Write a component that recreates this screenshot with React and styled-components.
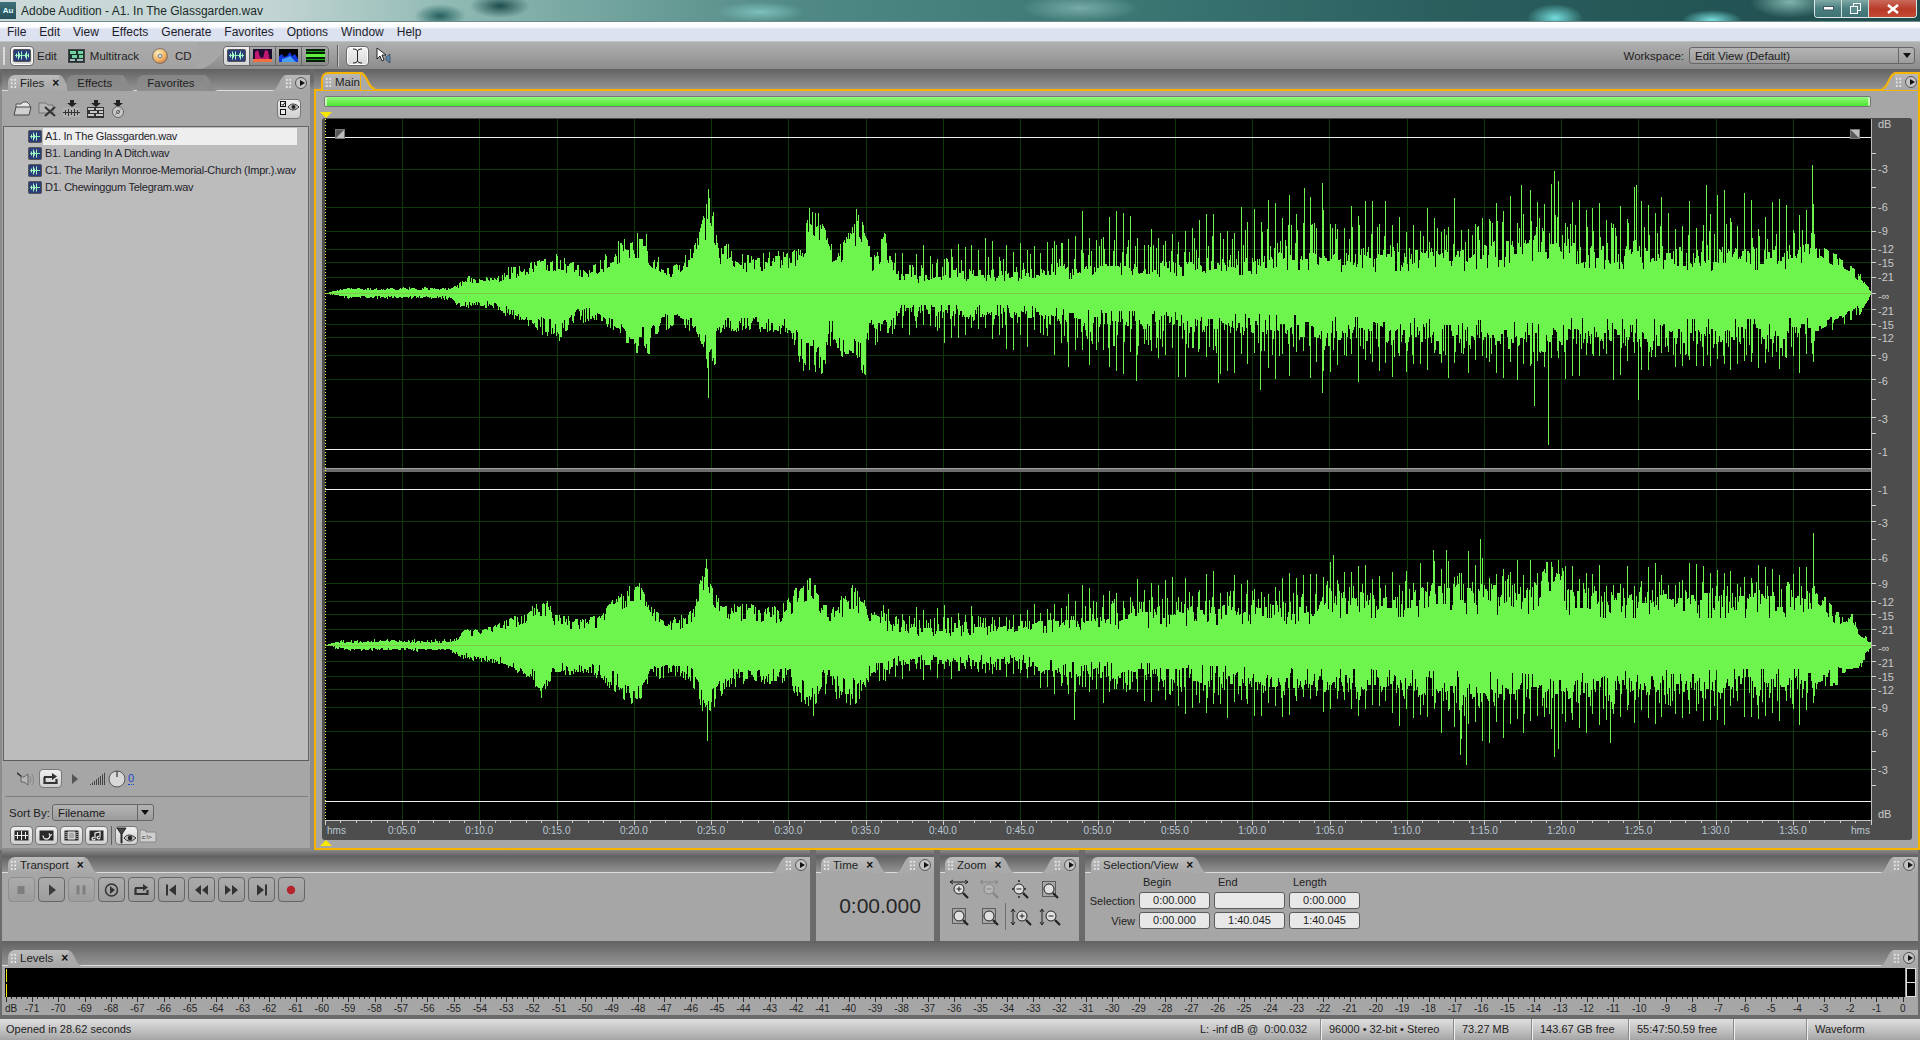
import React from 'react';
import styled, { createGlobalStyle } from 'styled-components';

const FONT = `"Liberation Sans", Arial, sans-serif`;

const GlobalStyle = createGlobalStyle`
  html, body { margin: 0; padding: 0; background: #6b6b6b; }
  * { box-sizing: border-box; }
`;

/* ---------- waveform data: [x, body amplitude, spike amplitude] in page px ---------- */

const CHANNELS = [
  {
    center: 293,
    top: [[325,0,0],[335,2,3],[345,4,5],[450,4,6],[455,6,9],[465,11,18],[480,12,17],[495,12,18],[505,18,26],[530,25,33],[540,29,36],[555,30,38],[575,24,30],[587,17,24],[605,32,42],[620,42,55],[645,42,65],[655,28,40],[665,20,30],[680,24,34],[695,38,50],[703,65,80],[708,75,105],[715,60,80],[720,35,45],[730,42,50],[740,30,40],[775,30,42],[800,33,45],[805,50,65],[810,72,95],[817,65,72],[826,50,60],[833,32,45],[840,35,50],[852,58,70],[858,72,84],[867,52,65],[871,25,40],[879,38,50],[884,52,66],[891,28,40],[895,14,40],[938,14,55],[945,17,55],[1041,17,60],[1065,20,85],[1093,22,85],[1144,22,78],[1200,25,85],[1248,26,95],[1282,33,100],[1310,33,105],[1322,28,110],[1340,30,100],[1466,32,95],[1480,36,100],[1521,38,108],[1536,48,110],[1554,50,122],[1566,36,100],[1636,34,108],[1665,34,95],[1706,32,108],[1790,34,95],[1812,36,100],[1817,40,50],[1836,30,36],[1854,20,25],[1862,13,16],[1871,1,2]],
    bottom: [[325,0,0],[335,2,4],[345,4,6],[450,4,7],[460,12,16],[480,11,15],[495,12,16],[505,17,24],[520,24,30],[540,32,38],[560,38,46],[572,24,34],[590,20,28],[600,24,32],[620,30,40],[630,48,58],[650,48,58],[660,30,38],[680,25,35],[695,30,40],[700,38,50],[707,60,80],[715,55,70],[720,35,45],[740,28,38],[770,30,40],[790,35,45],[800,60,72],[805,70,85],[824,62,72],[829,35,55],[845,55,62],[865,66,75],[869,30,50],[886,35,65],[896,17,45],[1041,18,62],[1065,24,80],[1144,26,82],[1248,30,90],[1340,34,90],[1466,38,85],[1540,44,95],[1570,36,90],[1665,38,85],[1812,36,88],[1820,36,40],[1836,28,32],[1854,22,26],[1862,14,17],[1871,1,2]],
    topPeaks: { 1812: 128, 1554: 122, 1521: 108, 1636: 108, 1706: 108, 1322: 110, 1304: 105, 708: 104 },
    bottomPeaks: { 1548: 152, 1534: 113, 1638: 107, 708: 105, 1322: 100, 1260: 97, 1218: 90, 1136: 88 },
  },
  {
    center: 645,
    top: [[325,0,0],[335,2,3],[345,3,6],[450,3,6],[455,5,8],[465,14,18],[480,11,15],[495,18,22],[515,24,28],[535,34,44],[545,38,44],[555,24,30],[580,21,28],[600,24,32],[610,38,44],[625,48,56],[640,48,70],[650,30,40],[665,20,28],[680,22,30],[695,35,44],[703,62,72],[706,80,86],[710,52,62],[720,38,46],[735,33,42],[780,30,40],[795,48,55],[810,55,68],[817,50,60],[824,32,45],[834,30,40],[848,46,65],[865,38,50],[869,28,40],[886,20,42],[903,13,38],[972,13,42],[1041,17,45],[1065,20,60],[1136,24,70],[1237,30,78],[1316,30,72],[1327,52,85],[1340,38,78],[1414,40,85],[1466,45,100],[1525,42,90],[1543,60,90],[1562,60,90],[1570,40,80],[1660,38,84],[1720,38,88],[1810,40,80],[1813,50,60],[1821,42,50],[1836,28,34],[1852,25,30],[1858,13,17],[1871,2,4]],
    bottom: [[325,0,0],[335,2,4],[345,4,6],[450,4,7],[460,11,15],[475,11,16],[490,14,18],[510,21,26],[530,29,34],[540,44,48],[550,27,36],[570,24,30],[590,24,30],[610,34,40],[625,44,50],[640,48,56],[650,30,40],[670,22,30],[690,30,38],[700,52,60],[705,70,80],[715,48,58],[725,34,42],[760,30,38],[790,32,38],[800,48,58],[815,56,66],[824,32,50],[845,44,60],[857,44,60],[869,28,40],[903,14,35],[1020,14,36],[1041,20,45],[1074,24,62],[1144,26,65],[1218,30,75],[1300,34,72],[1340,34,70],[1466,38,100],[1550,42,95],[1640,36,85],[1812,34,80],[1821,32,38],[1858,30,33],[1863,14,18],[1871,2,4]],
    topPeaks: { 1813: 112, 706: 86, 1480: 106, 1333: 90, 1433: 95, 1446: 95 },
    bottomPeaks: { 1466: 120, 1460: 110, 707: 96, 1074: 75, 1554: 112, 1610: 98, 1558: 104 },
  },
];

const seeded = (seed) => () => {
  seed = (seed + 0x6d2b79f5) | 0;
  let t = Math.imul(seed ^ (seed >>> 15), 1 | seed);
  t = (t + Math.imul(t ^ (t >>> 7), 61 | t)) ^ t;
  return ((t ^ (t >>> 14)) >>> 0) / 4294967296;
};

const buildPeaks = (points, explicit, seed) => {
  const rnd = seeded(seed);
  const peaks = [];
  let seg = 0;
  let grain = 1;
  for (let x = 325; x < 1871; x++) {
    while (seg < points.length - 2 && points[seg + 1][0] <= x) seg++;
    const [x0, b0, s0] = points[seg];
    const [x1, b1, s1] = points[seg + 1];
    const t = (x - x0) / (x1 - x0);
    const body = b0 + (b1 - b0) * t;
    const spike = s0 + (s1 - s0) * t;
    if (rnd() < 0.55) grain = (x > 895 && x < 1818 ? 0.8 : 0.7) + 0.6 * rnd();
    let amp = body * grain;
    if (x < 895) {
      if (rnd() < 0.3) amp = body + (spike - body) * rnd();
    } else if (x < 1818) {
      const beat = (x - 895) % 6.9 < 1;
      if (beat) amp = body + (spike - body) * (0.45 + 0.55 * Math.pow(rnd(), 1.4));
      else if (rnd() < 0.3) amp = body + (spike - body) * 0.55 * rnd();
      else if (rnd() < 0.12) amp = body * 0.7;
    }
    if (explicit[x]) amp = explicit[x];
    peaks.push(Math.round(amp));
  }
  return peaks;
};

const wavePath = CHANNELS.map((ch, i) => {
  const tops = buildPeaks(ch.top, ch.topPeaks, 11 + i * 7);
  const bots = buildPeaks(ch.bottom, ch.bottomPeaks, 29 + i * 13);
  return tops.map((a, k) => `M${325 + k + 0.5} ${ch.center - a}V${ch.center + bots[k]}`).join('');
}).join('');

const GRID_X = Array.from({ length: 19 }, (_, i) => 402 + 77.28 * i);
const GRID_OFFSETS = [124, 86, 62, 44, 31, 16];
const TIME_LABELS = ['0:05.0','0:10.0','0:15.0','0:20.0','0:25.0','0:30.0','0:35.0','0:40.0','0:45.0','0:50.0','0:55.0','1:00.0','1:05.0','1:10.0','1:15.0','1:20.0','1:25.0','1:30.0','1:35.0'];
const DB_LABELS = [
  ['-3',173],['-6',211],['-9',235],['-12',253],['-15',267],['-21',281],['-∞',300],['-21',315],['-15',329],['-12',342],['-9',361],['-6',385],['-3',423],['-1',456],
  ['-1',494],['-3',527],['-6',562],['-9',588],['-12',606],['-15',620],['-21',634],['-∞',652],['-21',667],['-15',681],['-12',694],['-9',712],['-6',737],['-3',774],
];

/* ---------- shell ---------- */

const Root = styled.div`
  width: 1920px;
  height: 1040px;
  overflow: hidden;
  display: flex;
  flex-direction: column;
  background: #6b6b6b;
  font: 11.5px ${FONT};
  color: #222;
`;

const TitleBar = styled.div`
  height: 21px;
  flex: none;
  display: flex;
  align-items: flex-start;
  justify-content: space-between;
  background:
    radial-gradient(ellipse 28px 14px at 1555px 18px, #74dcdc, transparent),
    radial-gradient(ellipse 30px 10px at 1712px 20px, #78e0e0, transparent),
    radial-gradient(ellipse 40px 16px at 1790px 2px, #7fb3ac, transparent),
    radial-gradient(ellipse 30px 12px at 500px 6px, #1d4d4d, transparent),
    radial-gradient(ellipse 26px 12px at 440px 16px, #24605f, transparent),
    radial-gradient(ellipse 44px 10px at 760px 12px, #7cc0bc, transparent),
    radial-gradient(ellipse 60px 14px at 1080px 8px, #76aaa6, transparent),
    linear-gradient(90deg, #ccdad9 0, #c3d5d3 14%, #8db8b2 24%, #4f8884 42%, #3a7572 60%, #2a5f5e 75%, #1f4c4d 100%);
`;

const TitleLeft = styled.div`
  display: flex;
  align-items: center;
  height: 21px;
`;

const AppIcon = styled.div`
  width: 16px;
  height: 17px;
  margin-right: 5px;
  background: linear-gradient(#3e6f78, #27505a);
  color: #dff;
  font: bold 8px/17px ${FONT};
  text-align: center;
`;

const TitleText = styled.span`
  font-size: 12px;
  color: #1c2a2a;
`;

const WindowControls = styled.div`
  display: flex;
  margin-right: 3px;
  height: 18px;
  border: 1px solid #dfe8e8;
  border-top: 0;
  border-radius: 0 0 4px 4px;
  overflow: hidden;
`;

const WinBtn = styled.div`
  width: ${(p) => p.$w}px;
  display: flex;
  align-items: center;
  justify-content: center;
  border-right: 1px solid #cfe0de;
  background: ${(p) => (p.$close ? 'linear-gradient(#c96a5c, #b93a28 55%, #c44a34)' : 'linear-gradient(#7fa9a6, #4a7f7f 50%, #3f7273)')};
  &:last-child { border-right: 0; }
`;

const MenuBar = styled.div`
  height: 21px;
  flex: none;
  display: flex;
  padding-left: 1px;
  align-items: center;
  background: linear-gradient(#ffffff 0, #fbfcfe 25%, #dde2f1 35%, #dde2f1 94%, #a8a8a8 100%);
  border-top: 1px solid #6f8a8a;
`;

const MenuItem = styled.span`
  padding: 0 6px;
  margin-right: 1px;
  font-size: 12px;
  color: #1e1e2c;
`;

const ToolbarRow = styled.div`
  height: 27px;
  flex: none;
  display: flex;
  background: linear-gradient(#b0b0b0, #8c8c8c);
`;

const ToolbarLeft = styled.div`
  display: flex;
  align-items: center;
  width: 200px;
  padding-left: 3px;
  background: linear-gradient(#ababab, #a2a2a2);
`;

const ToolbarGrip = styled.div`
  width: 2px;
  height: 18px;
  margin-right: 5px;
  background-image: radial-gradient(#e0e0e0 0.8px, transparent 1px);
  background-size: 2px 3px;
`;

const ToolButton = styled.div`
  width: ${(p) => p.$w || 23}px;
  height: 20px;
  flex: none;
  display: flex;
  align-items: center;
  justify-content: center;
  border: 1px solid #6a6a6a;
  border-radius: 4px;
  background: linear-gradient(#f4f4f4, #d8d8d8);
  box-shadow: inset 0 0 0 1px #fff;
`;

const ViewLabel = styled.span`
  color: #222;
  margin: 0 ${(p) => p.$right || 0}px 0 ${(p) => p.$left || 0}px;
`;

const ModeGroup = styled.div`
  display: flex;
  align-items: center;
  height: 20px;
  margin-left: -14px;
  border: 1px solid #666;
  border-radius: 4px;
  overflow: hidden;
  background: #8a8a8a;
`;

const ModeCell = styled.div`
  width: 26px;
  height: 18px;
  display: flex;
  align-items: center;
  justify-content: center;
  border-right: 1px solid #666;
  background: ${(p) => (p.$on ? 'linear-gradient(#f0f0f0, #d4d4d4)' : 'linear-gradient(#a8a8a8, #8c8c8c)')};
  &:last-child { border-right: 0; }
`;

const ToolbarSep = styled.div`
  width: 1px;
  height: 22px;
  margin: 0 8px;
  background: #5c5c5c;
  box-shadow: 1px 0 0 #c6c6c6;
`;

const Middle = styled.div`
  display: flex;
  align-items: center;
  flex: 1;
`;

const CursorSlot = styled.span`
  margin-left: 7px;
`;

const WorkspacePick = styled.div`
  display: flex;
  align-items: center;
  gap: 5px;
  margin-right: 5px;
`;

const Select = styled.div`
  width: ${(p) => p.$w}px;
  height: 17px;
  display: flex;
  justify-content: space-between;
  align-items: center;
  border: 1px solid #666;
  border-radius: 3px;
  background: linear-gradient(#b4b4b4, #9c9c9c);
  padding-left: 5px;
  color: #1a1a1a;
`;

const SelectArrow = styled.span`
  width: 16px;
  height: 15px;
  border-left: 1px solid #666;
  display: flex;
  align-items: center;
  justify-content: center;
  &::after {
    content: '';
    border: 4px solid transparent;
    border-top: 5px solid #111;
    border-bottom: 0;
  }
`;

/* ---------- docked panels ---------- */

const WorkRow = styled.div`
  flex: 1;
  display: flex;
  gap: 4px;
  padding-left: 2px;
  min-height: 0;
  background: linear-gradient(#6a6a6a 0, #6a6a6a 12px, #8c8c8c 21px, #8c8c8c 100%);
`;

const DockRow = styled.div`
  height: ${(p) => p.$h}px;
  flex: none;
  display: flex;
  gap: 6px;
  padding: 0 2px;
`;

const Panel = styled.div`
  display: flex;
  flex-direction: column;
  width: ${(p) => (p.$w ? `${p.$w}px` : 'auto')};
  flex: ${(p) => (p.$w ? 'none' : 1)};
  min-width: 0;
  margin-bottom: ${(p) => p.$mb || 0}px;
`;

const TabBar = styled.div`
  height: ${(p) => p.$h}px;
  flex: none;
  display: flex;
  align-items: flex-end;
  position: relative;
  z-index: 2;
  background: linear-gradient(${(p) => (p.$fade ? '#8a8a8a 0, #626262 28%' : '#626262 0')}, #939393 100%);
`;

const Body = styled.div`
  flex: 1;
  min-height: 0;
  display: flex;
  flex-direction: column;
  background: #a6a6a6;
  border-top: 1px solid #dcdcdc;
`;

const FocusBody = styled(Body)`
  border: 2px solid #f6b400;
  padding-top: 5px;
`;

const TabShape = styled.div`
  display: flex;
  align-items: flex-end;
  height: ${(p) => p.$h || 16}px;
  margin-bottom: -1px;
  margin-left: ${(p) => p.$left || 0}px;
  position: relative;
`;

const TabFace = styled.div`
  display: flex;
  align-items: center;
  height: 100%;
  padding: ${(p) => (p.$active ? '0 0 0 2px' : '0 9px 0 10px')};
  gap: 3px;
  background: ${(p) => (p.$active ? 'linear-gradient(#bcbcbc, #a6a6a6)' : 'linear-gradient(#868686, #8e8e8e)')};
  border-top-left-radius: 7px;
  color: #1f1f1f;
  ${(p) => p.$focus && `
    border: 2px solid #f6b400;
    border-bottom: 0;
    background: linear-gradient(#b8b8b8, #a6a6a6);
  `}
`;

const Grip = styled.span`
  width: 7px;
  height: 11px;
  flex: none;
  background-image: radial-gradient(#e6e6e6 0.9px, transparent 1.1px);
  background-size: 3.5px 3.6px;
`;

const CloseMark = styled.span`
  font: bold 12px/10px ${FONT};
  margin-left: 5px;
  color: #111;
`;

const Ear = styled.div`
  display: flex;
  align-items: flex-end;
  margin-left: auto;
  height: ${(p) => p.$h || 16}px;
  margin-bottom: -1px;
`;

const EarFace = styled.div`
  height: 100%;
  display: flex;
  align-items: center;
  gap: 3px;
  padding-right: ${(p) => p.$pad || 3}px;
  background: linear-gradient(#b8b8b8, #a6a6a6);
  ${(p) => p.$focus && 'border-top: 2px solid #f6b400; border-right: 2px solid #f6b400;'}
`;

const PlayRound = styled.span`
  width: 12px;
  height: 12px;
  border-radius: 50%;
  border: 1px solid #555;
  background: #c4c4c4;
  display: flex;
  align-items: center;
  justify-content: center;
  &::after {
    content: '';
    margin-left: 2px;
    border: 3px solid transparent;
    border-left: 5px solid #111;
    border-right: 0;
  }
`;

const CurveSvg = styled.svg`
  display: block;
  flex: none;
  margin-left: ${(p) => p.$ml || 0}px;
  margin-right: ${(p) => p.$mr || 0}px;
`;

const Tab = ({ label, active, focus, close, grip, left, height }) => (
  <TabShape $left={left} $h={height}>
    <TabFace $active={active} $focus={focus}>
      {grip && <Grip />}
      <span>{label}</span>
      {close && <CloseMark>×</CloseMark>}
    </TabFace>
    <CurveSvg width="14" height={height || 16} viewBox="0 0 14 16" preserveAspectRatio="none" $ml={focus ? -1 : 0}>
      <path d="M0 0C6 0 8 16 14 16H0Z" fill={active ? '#aaaaaa' : '#8b8b8b'} />
      {focus && <path d="M0 1C6 1 7 15 14 15" fill="none" stroke="#f6b400" strokeWidth="2" />}
    </CurveSvg>
  </TabShape>
);

const PanelEar = ({ focus, height }) => (
  <Ear $h={height}>
    <CurveSvg width="14" height={height || 16} viewBox="0 0 14 16" preserveAspectRatio="none" $mr={-1}>
      <path d="M0 16C6 16 8 0 14 0V16Z" fill="#aaaaaa" />
      {focus && <path d="M0 15C6 15 7 1 14 1" fill="none" stroke="#f6b400" strokeWidth="2" />}
    </CurveSvg>
    <EarFace $focus={focus} $pad={focus ? 1 : 3}>
      <Grip />
      <PlayRound />
    </EarFace>
  </Ear>
);

/* ---------- files panel ---------- */

const FilesTools = styled.div`
  height: 35px;
  flex: none;
  display: flex;
  align-items: center;
  padding: 0 9px 0 11px;
  gap: 6px;
`;

const EyeButton = styled.div`
  margin-left: auto;
  width: 24px;
  height: 20px;
  display: flex;
  align-items: center;
  justify-content: center;
  border: 1px solid #777;
  border-radius: 4px;
  background: linear-gradient(#f0f0f0, #cfcfcf);
`;

const FileList = styled.div`
  flex: 1;
  margin: 0 1px;
  padding-top: 1px;
  background: #bcbcbc;
  border: 1px solid #646464;
  border-bottom-color: #5a5a5a;
`;

const FileRow = styled.div`
  height: 17px;
  display: flex;
  align-items: center;
  padding-left: 24px;
`;

const FileName = styled.span`
  margin-left: 1px;
  width: 254px;
  height: 17px;
  line-height: 17px;
  font-size: 11px;
  letter-spacing: -0.25px;
  padding-left: 2px;
  white-space: nowrap;
  color: #23232b;
  background: ${(p) => (p.$on ? '#eeeeee' : 'transparent')};
`;

const FilesFoot = styled.div`
  height: 87px;
  flex: none;
  display: flex;
  flex-direction: column;
`;

const PreviewRow = styled.div`
  height: 36px;
  flex: none;
  display: flex;
  align-items: center;
  padding-left: 11px;
  margin: 0 2px 0 3px;
  border-bottom: 1px solid #7e7e7e;
`;

const SmallBtn = styled.div`
  width: ${(p) => p.$w || 23}px;
  height: 19px;
  flex: none;
  display: flex;
  align-items: center;
  justify-content: center;
  margin-left: ${(p) => p.$ml || 0}px;
  border: 1px solid #777;
  border-radius: 4px;
  background: linear-gradient(#f0f0f0, #cfcfcf);
`;

const PlayHint = styled.svg`
  flex: none;
  margin: 0 11px 0 9px;
`;

const KnobSlot = styled.span`
  margin-left: 2px;
`;

const LinkValue = styled.span`
  color: #1846c8;
  font-size: 11px;
  border-bottom: 1px dotted #1846c8;
  margin-left: 2px;
`;

const SortRow = styled.div`
  display: flex;
  align-items: center;
  height: 17px;
  margin-top: 7px;
  padding-left: 7px;
  gap: 2px;
`;

const SortButtons = styled.div`
  display: flex;
  align-items: center;
  gap: 2px;
  margin-top: 5px;
  padding-left: 8px;
`;

const VSep = styled.div`
  width: 1px;
  height: 19px;
  margin: 0 1px;
  background: #5f5f5f;
`;

/* ---------- main panel ---------- */

const Overview = styled.div`
  height: 11px;
  width: 1547px;
  margin-left: 8px;
  flex: none;
  border: 1px solid #777;
  border-radius: 2px;
  background: linear-gradient(#96f880, #70f054 45%, #4ce434);
  box-shadow: inset 4px 0 0 -2px #c8f8b8, inset -4px 0 0 -2px #c8f8b8;
`;

const Chart = styled.svg`
  display: block;
  flex: none;
  margin-top: 1px;
  text {
    font: 10px ${FONT};
    fill: #bac6d2;
  }
  text.db {
    font-size: 11px;
    fill: #c9c9c9;
  }
`;

/* ---------- transport, time, zoom, selection ---------- */

const TransportBar = styled.div`
  display: flex;
  gap: 3px;
  padding: 4px 0 0 6px;
`;

const TransportBtn = styled.div`
  width: 27px;
  height: 25px;
  display: flex;
  align-items: center;
  justify-content: center;
  border-radius: 4px;
  border: 1px solid ${(p) => (p.$off ? '#8e8e8e' : '#666')};
  background: linear-gradient(#ababab, #9d9d9d);
`;

const TimeValue = styled.div`
  flex: 1;
  display: flex;
  align-items: center;
  justify-content: center;
  padding: 0 0 2px 10px;
  font-size: 21px;
  color: #262626;
`;

const ZoomGrid = styled.div`
  display: grid;
  grid-template-columns: repeat(4, 30px);
  grid-auto-rows: 27px;
  padding: 3px 0 0 5px;
`;

const ZoomCell = styled.div`
  display: flex;
  align-items: center;
  justify-content: center;
  border-left: ${(p) => (p.$sep ? '1px solid #707070' : '0')};
`;

const SelectionGrid = styled.div`
  display: grid;
  grid-template-columns: 49px 71px 71px 71px;
  grid-template-rows: 15px 17px 17px;
  column-gap: 4px;
  row-gap: 3px;
  padding: 1px 0 0 1px;
  font-size: 11px;
  align-items: center;
`;

const ColHead = styled.span`
  padding-left: 4px;
  color: #222;
`;

const RowHead = styled.span`
  text-align: right;
  color: #222;
`;

const TimeField = styled.div`
  height: 17px;
  line-height: 15px;
  text-align: center;
  font-size: 11px;
  border: 1px solid #5c5c5c;
  border-radius: 3px;
  background: #e8e8e8;
  color: #1d1d1d;
`;

/* ---------- levels, status ---------- */

const MeterRow = styled.div`
  height: 29px;
  display: flex;
  margin: 2px 2px 0 3px;
  gap: 1px;
  flex: none;
`;

const Meter = styled.div`
  flex: 1;
  position: relative;
  background: #000;
  &::before {
    content: '';
    position: absolute;
    left: 1px;
    top: 1px;
    bottom: 0;
    width: 1px;
    background: linear-gradient(#f4e800 47%, #000 47%, #000 52%, #f4e800 52%);
  }
`;

const PeakBoxes = styled.div`
  width: 10px;
  display: flex;
  flex-direction: column;
  gap: 1px;
  background: #ddd;
  padding: 1px;
`;

const PeakBox = styled.div`
  flex: 1;
  background: #000;
`;

const LevelScale = styled.svg`
  display: block;
  flex: none;
  text {
    font: 10px ${FONT};
    fill: #222;
  }
`;

const StatusBar = styled.div`
  height: 21px;
  flex: none;
  margin-top: 4px;
  display: flex;
  align-items: center;
  font-size: 11px;
  color: #222;
  background: linear-gradient(#dedede, #c4c4c4 50%, #a4a4a4);
`;

const StatusText = styled.div`
  flex: ${(p) => (p.$w ? 'none' : 1)};
  width: ${(p) => (p.$w ? `${p.$w}px` : 'auto')};
  height: 100%;
  line-height: 21px;
  padding-left: ${(p) => p.$pad ?? 7}px;
  white-space: pre;
  border-left: ${(p) => (p.$first ? '0' : '1px solid #eee')};
  box-shadow: ${(p) => (p.$first ? 'none' : '-1px 0 0 #8a8a8a')};
`;

/* ---------- icons ---------- */

const IconSvg = styled.svg`
  display: block;
  flex: none;
`;

const Svg = ({ w, h, children }) => (
  <IconSvg width={w} height={h} viewBox={`0 0 ${w} ${h}`}>{children}</IconSvg>
);

const WaveGlyph = ({ w = 20, h = 14 }) => (
  <Svg w={w} h={h}>
    <rect x="0.5" y="0.5" width={w - 1} height={h - 1} rx="1" fill="#2c3c78" stroke="#555" />
    <path d={`M2 ${h / 2}H${w - 2}`} stroke="#7ef0a8" />
    {[3, 5, 6, 8, 12, 13, 15, 17].filter((x) => x < w - 2).map((x, i) => (
      <path key={x} d={`M${x + 0.5} ${h / 2 - (i % 2 ? 4 : 2)}V${h / 2 + (i % 2 ? 4 : 2)}`} stroke="#a8f8c8" />
    ))}
  </Svg>
);

const TrackGlyph = () => (
  <Svg w={17} h={14}>
    <rect x="0.5" y="0.5" width="16" height="13" fill="#1e2f2c" stroke="#444" />
    <path d="M2 2h6v3H2zM10 2h5v3h-5zM4 6h5v3H4zM11 6h4v3h-4z" fill="#6fd2a0" />
    <path d="M2 10h5v2H2zM9 10h6v2H9z" fill="#a9b9c4" />
  </Svg>
);

const CdGlyph = () => (
  <Svg w={16} h={16}>
    <defs>
      <radialGradient id="cdg" cx="0.4" cy="0.35" r="0.75">
        <stop offset="0" stopColor="#fff6c8" /><stop offset="0.6" stopColor="#f0b060" /><stop offset="1" stopColor="#c06030" />
      </radialGradient>
    </defs>
    <circle cx="8" cy="8" r="7.5" fill="url(#cdg)" stroke="#777" />
    <circle cx="8" cy="8" r="2" fill="#ddd" stroke="#777" />
  </Svg>
);

const SpectralGlyph = ({ kind }) => {
  if (kind === 'freq') return (
    <Svg w={19} h={13}>
      <rect width="19" height="13" fill="#1a0a30" />
      <path d="M2 13V3l3-2 2 7 3 1 2-8 3 1 2 11Z" fill="#c0186c" />
      <rect y="10" width="19" height="3" fill="#f07040" />
    </Svg>
  );
  if (kind === 'pan') return (
    <Svg w={19} h={13}>
      <rect width="19" height="13" fill="#000" />
      <path d="M0 13V7l3-2 2 3 3-1 3-4 2 4 3-2 3 5v3Z" fill="#1238d8" />
      <path d="M3 13V10l4-1 4-2 3 3 3 3Z" fill="#48a0f0" />
    </Svg>
  );
  return (
    <Svg w={19} h={13}>
      <rect width="19" height="13" fill="#041c04" />
      <path d="M0 6.5h19" stroke="#60f040" strokeWidth="3" />
      <path d="M0 2.5h19M0 10.5h19" stroke="#18a018" />
    </Svg>
  );
};

const IBeam = () => (
  <Svg w={11} h={16}>
    <path d="M1 1c3 0 4 1 4.5 2v10c-.5 1-1.5 2-4.500 2M10 1c-3 0-4 1-4.500 2v10c.5 1 1.500 2 4.500 2" fill="none" stroke="#222" />
  </Svg>
);

const CursorGlyph = () => (
  <Svg w={17} h={17}>
    <path d="M1 1v11l3-3 2 5 2-1-2-5h4Z" fill="#fff" stroke="#111" strokeWidth="0.9" />
    <path d="M10 10l4-3v9l-4-3Z" fill="#5a84a8" stroke="#345" strokeWidth="0.7" />
  </Svg>
);

const FolderOpen = () => (
  <Svg w={19} h={17}>
    <path d="M3 7V4h5l2-2h4l3 3v3" fill="#e4e4e4" stroke="#555" />
    <path d="M1 15l2-8h15l-2 8Z" fill="#d0d0d0" stroke="#444" />
  </Svg>
);

const FolderClose = () => (
  <Svg w={19} h={17}>
    <path d="M1 3h7l2 2h5v8H1Z" fill="#b4b4b4" stroke="#777" />
    <path d="M7 7l10 9M17 7L7 16" stroke="#333" strokeWidth="2" />
  </Svg>
);

const ImportTo = ({ children }) => (
  <Svg w={18} h={18}>
    <path d="M7 0h4v3h3l-5 4-5-4h3Z" fill="#222" />
    {children}
  </Svg>
);

const ImportWave = () => (
  <ImportTo>
    <rect y="8" width="17" height="9" fill="#b0b0b0" />
    <path d="M0 12.500h17M2.500 10v5M5.500 9v7M8.500 10v5M11.500 9v7M14.500 10v5" stroke="#333" />
  </ImportTo>
);

const ImportTrack = () => (
  <ImportTo>
    <rect y="7" width="17" height="11" fill="#333" />
    <path d="M1 8h6v2H1zM9 8h7v2H9zM3 11h7v2H3zM12 11h4v2h-4zM1 14h6v2H1zM9 14h7v2H9z" fill="#c8c8c8" />
  </ImportTo>
);

const ImportCd = () => (
  <Svg w={14} h={18}>
    <path d="M5 0h4v3h3L7 7 2 3h3Z" fill="#222" />
    <circle cx="7" cy="12" r="5.500" fill="#c8c8c8" stroke="#666" />
    <circle cx="7" cy="12" r="1.500" fill="#eee" stroke="#555" />
    <path d="M4 15l6-6" stroke="#888" />
  </Svg>
);

const CheckEye = () => (
  <Svg w={21} h={17}>
    <rect x="1.500" y="1.500" width="5" height="5" fill="#eee" stroke="#111" />
    <path d="M2.500 4l1.500 1.500 2-3" fill="none" stroke="#111" />
    <rect x="1.500" y="9.500" width="5" height="5" fill="#eee" stroke="#111" />
    <path d="M9 7c3-4 7-4 11 0-4 4-8 4-11 0Z" fill="#bbb" stroke="#333" />
    <circle cx="14.500" cy="7" r="2" fill="#222" />
  </Svg>
);

const Speaker = () => (
  <Svg w={18} h={14}>
    <path d="M1 0l5 4-1 1-4-3Z" fill="#333" />
    <path d="M5 5h3l4-3v11l-4-3H5Z" fill="#b8b8b8" stroke="#666" />
    <path d="M14 4c1 2 1 5 0 7M16 2c2 3 2 8 0 11" fill="none" stroke="#888" />
  </Svg>
);

const LoopGlyph = ({ color = '#333' }) => (
  <Svg w={15} h={13}>
    <path d="M1.500 5v6h12V7" fill="none" stroke={color} strokeWidth="2.200" />
    <path d="M1 4h8V1l5 3.500L9 8V6H1Z" fill={color} />
  </Svg>
);

const Bars = () => (
  <Svg w={16} h={13}>
    {[0, 1, 2, 3, 4, 5, 6, 7].map((i) => (
      <path key={i} d={`M${i * 2 + 0.5} 13V${12 - i * 1.6}`} stroke="#444" />
    ))}
  </Svg>
);

const Knob = () => (
  <Svg w={18} h={18}>
    <circle cx="9" cy="9" r="8" fill="#d8d8d8" stroke="#555" />
    <path d="M9 1v6" stroke="#333" strokeWidth="1.200" />
  </Svg>
);

const FilterGlyph = ({ kind }) => (
  <Svg w={15} h={13}>
    <rect x="0.500" y="1.500" width="14" height="10" fill="#2a2a2a" />
    {kind === 'wave' && <path d="M1 6.500h13M3.500 3v7M7.500 2v9M11.500 3v7" stroke="#eee" />}
    {kind === 'loop' && <path d="M4 5a3.500 3.500 0 1 0 7 0M10 3l1 2 2-1" fill="none" stroke="#eee" strokeWidth="1.300" transform="translate(0 1.500)" />}
    {kind === 'film' && <path d="M4 3h7v7H4ZM2 3v1M2 5v1M2 7v1M2 9v1M13 3v1M13 5v1M13 7v1M13 9v1" fill="#aaa" stroke="#eee" />}
    {kind === 'note' && <path d="M6 9V4l5-1v5M6 9.500a1.500 1.200 0 1 1-1-1M11 8.500a1.500 1.200 0 1 1-1-1" fill="none" stroke="#eee" strokeWidth="1.200" />}
  </Svg>
);

const FunnelEye = () => (
  <Svg w={21} h={17}>
    <path d="M1 1h9L6 7v9l-1 0V7Z" fill="#444" stroke="#222" />
    <path d="M8 11c3-4 7-4 12 0-4 4-9 4-12 0Z" fill="#bbb" stroke="#333" />
    <circle cx="14" cy="11" r="2.200" fill="#222" />
  </Svg>
);

const DosFolder = () => (
  <Svg w={17} h={15}>
    <path d="M0 2h5l1 2h10v10H0Z" fill="#cfcfcf" stroke="#888" />
    <text x="2" y="11" fontSize="6" fontFamily="Liberation Sans" fill="#222">c:\&gt;</text>
  </Svg>
);

const TRANSPORT = [
  { key: 'stop', off: true, d: <rect x="3.500" y="3" width="7" height="8" fill="#7e7e7e" /> },
  { key: 'play', d: <path d="M5 1.500l7 5.500-7 5.500Z" fill="#3c3c3c" /> },
  { key: 'pause', off: true, d: <path d="M2.500 2.500h3v9h-3zM8.500 2.500h3v9h-3z" fill="#7e7e7e" /> },
  { key: 'playall', d: <><circle cx="7.500" cy="7" r="6" fill="none" stroke="#333" strokeWidth="1.500" /><path d="M6 3l5 4-5 4Z" fill="#333" /></> },
  { key: 'loop', loop: true },
  { key: 'start', d: <path d="M2 1.500h2v11H2zM12 1.500v11l-7-5.500Z" fill="#333" /> },
  { key: 'rew', d: <path d="M7 2v10L1 7ZM14 2v10L8 7Z" fill="#333" /> },
  { key: 'ff', d: <path d="M1 2v10l6-5ZM8 2v10l6-5Z" fill="#333" /> },
  { key: 'end', d: <path d="M3 1.500v11l7-5.500ZM11 1.500h2v11h-2Z" fill="#333" /> },
  { key: 'rec', d: <circle cx="7" cy="7" r="4.200" fill="#b4242a" /> },
];

const Magnifier = ({ sign, faded, frame, arrowTop, arrowV, dots }) => {
  const ink = faded ? '#858585' : '#222';
  const cx = arrowV ? 12 : 10;
  return (
    <Svg w={22} h={22}>
      {frame && <rect x="3.500" y="2.500" width="13" height="15" fill="none" stroke="#111" strokeDasharray="1 1" />}
      {arrowTop && <path d="M1 3h18M1 3l3-2M1 3l3 2M19 3l-3-2M19 3l-3 2" fill="none" stroke={ink} />}
      {arrowV && <path d="M3 3v16M3 3L1 6M3 3l2 3M3 19l-2-3M3 19l2-3" fill="none" stroke={ink} />}
      {dots && <path d="M10 1v2M10 17v2M3 10h2M15 10h2" stroke={ink} strokeWidth="1.500" />}
      <circle cx={cx} cy="10" r="5" fill={faded ? '#b6b6b6' : '#e0e0e0'} stroke={ink} />
      <path d={`M${cx + 4} 14l5 5`} stroke={ink} strokeWidth="2.200" />
      {sign && <path d={`M${cx - 2.5} 10h5${sign === '+' ? `M${cx} 7.500v5` : ''}`} stroke={ink} />}
    </Svg>
  );
};

const Handle = ({ x, flip }) => (
  <g transform={`translate(${x} 129)`}>
    <rect width="10" height="10" fill="#5a5a5a" />
    <path d={flip ? 'M0 0h10v10Z' : 'M10 0v10H0Z'} fill="#bdbdbd" />
    <rect x="0.500" y="0.500" width="9" height="9" fill="none" stroke="#777" />
  </g>
);

const WaveChart = () => (
  <Chart width="1602" height="740" viewBox="316 108 1602 740">
    <rect x="322" y="118" width="1590" height="722" rx="3" fill="#4d4d4d" />
    <rect x="325" y="119" width="1547" height="701" fill="#000" />
    <g stroke="#0d380a" strokeWidth="1" shapeRendering="crispEdges">
      {GRID_X.map((x) => <path key={x} d={`M${Math.round(x) + 0.5} 119V820`} />)}
      {CHANNELS.map((ch) => GRID_OFFSETS.flatMap((o) => [ch.center - o, ch.center + o]).map((y) => (
        <path key={`${ch.center}-${y}`} d={`M325 ${y + 0.5}H1871`} />
      )))}
    </g>
    <path d={wavePath} stroke="#6df44d" strokeWidth="1" shapeRendering="crispEdges" fill="none" />
    <g shapeRendering="crispEdges">
      <path d="M325 293.500H1871M325 645.500H1871" stroke="#80c848" />
      <path d="M325 137.500H1871M325 449.500H1871M325 489.500H1871M325 801.500H1871" stroke="#eeeeee" />
      <rect x="323" y="468" width="1549" height="4" fill="#6c6c6c" />
      <path d="M325 468.500H1872" stroke="#a0a0a0" />
      <path d="M325.500 119V820" stroke="#ffff30" strokeDasharray="1 2" />
      <path d="M1871.500 119V820" stroke="#bbbbbb" />
      <path d="M325 820.500H1872" stroke="#c4c4c4" />
    </g>
    <Handle x={335} />
    <Handle x={1850} flip />
    <path d="M320 112h12l-6 6Z" fill="#f8e800" />
    <path d="M320 846h12l-6-6Z" fill="#f8e800" />
    <g stroke="#d0d0d0" shapeRendering="crispEdges">
      {Array.from({ length: 101 }, (_, i) => {
        const x = Math.round(325 + 15.456 * i) + 0.5;
        return <path key={i} d={`M${x} 820V${i % 5 === 0 ? 825 : 823}`} />;
      })}
      {CHANNELS.flatMap((ch) => [0, ...GRID_OFFSETS, 106, 140].flatMap((o) => [ch.center - o, ch.center + o]))
        .map((y, i) => <path key={i} d={`M1872 ${y + 0.5}h4`} />)}
    </g>
    <text x="327" y="834">hms</text>
    <text x="1851" y="834">hms</text>
    {TIME_LABELS.map((t, i) => <text key={t} x={GRID_X[i]} y="834" textAnchor="middle">{t}</text>)}
    <text className="db" x="1878" y="128">dB</text>
    <text className="db" x="1878" y="818">dB</text>
    {DB_LABELS.map(([t, y]) => <text key={`${t}${y}`} className="db" x="1878" y={y}>{t}</text>)}
  </Chart>
);

const Levels = () => {
  const dbs = Array.from({ length: 72 }, (_, i) => i - 71);
  return (
    <LevelScale width="1916" height="18" viewBox="2 997 1916 18">
      <g stroke="#2a2a2a" shapeRendering="crispEdges">
        {Array.from({ length: 361 }, (_, i) => {
          const x = Math.round(32 + 5.27 * (i - 5)) + 0.5;
          if (x < 6) return null;
          return <path key={i} d={`M${x} 997V${i % 5 === 0 ? 1002 : 999}`} />;
        })}
      </g>
      <text x="5" y="1012">dB</text>
      {dbs.map((d) => <text key={d} x={32 + (d + 71) * 26.35} y="1012" textAnchor="middle">{d}</text>)}
    </LevelScale>
  );
};

const MENU = ['File', 'Edit', 'View', 'Effects', 'Generate', 'Favorites', 'Options', 'Window', 'Help'];
const FILES = ['A1. In The Glassgarden.wav', 'B1. Landing In A Ditch.wav', 'C1. The Marilyn Monroe-Memorial-Church (Impr.).wav', 'D1. Chewinggum Telegram.wav'];

const App = () => (
  <>
    <GlobalStyle />
    <Root>
      <TitleBar>
        <TitleLeft>
          <AppIcon>Au</AppIcon>
          <TitleText>Adobe Audition - A1. In The Glassgarden.wav</TitleText>
        </TitleLeft>
        <WindowControls>
          <WinBtn $w={27}><Svg w={11} h={5}><rect x="0.500" y="0.500" width="10" height="3.500" fill="#fff" stroke="#456" /></Svg></WinBtn>
          <WinBtn $w={27}><Svg w={11} h={11}><rect x="3.500" y="0.500" width="7" height="7" fill="none" stroke="#fff" /><rect x="0.500" y="3.500" width="7" height="7" fill="#5b8a8a" stroke="#fff" /></Svg></WinBtn>
          <WinBtn $w={47} $close><Svg w={12} h={10}><path d="M1 1l10 8M11 1L1 9" stroke="#fff" strokeWidth="2.600" /></Svg></WinBtn>
        </WindowControls>
      </TitleBar>

      <MenuBar>
        {MENU.map((m) => <MenuItem key={m}>{m}</MenuItem>)}
      </MenuBar>

      <ToolbarRow>
        <ToolbarLeft>
          <ToolbarGrip />
          <ToolButton $w={24}><WaveGlyph w={18} h={13} /></ToolButton>
          <ViewLabel $left={3} $right={11}>Edit</ViewLabel>
          <TrackGlyph />
          <ViewLabel $left={5} $right={13}>Multitrack</ViewLabel>
          <CdGlyph />
          <ViewLabel $left={7}>CD</ViewLabel>
        </ToolbarLeft>
        <CurveSvg width="40" height="27" viewBox="0 0 40 27" $ml={-3}>
          <path d="M0 0H40C26 1 20 27 0 27Z" fill="#a6a6a6" />
        </CurveSvg>
        <Middle>
          <ModeGroup>
            <ModeCell $on><WaveGlyph w={19} h={13} /></ModeCell>
            <ModeCell><SpectralGlyph kind="freq" /></ModeCell>
            <ModeCell><SpectralGlyph kind="pan" /></ModeCell>
            <ModeCell><SpectralGlyph kind="phase" /></ModeCell>
          </ModeGroup>
          <ToolbarSep />
          <ToolButton><IBeam /></ToolButton>
          <CursorSlot><CursorGlyph /></CursorSlot>
        </Middle>
        <WorkspacePick>
          <span>Workspace:</span>
          <Select $w={226}>Edit View (Default)<SelectArrow /></Select>
        </WorkspacePick>
      </ToolbarRow>

      <WorkRow>
        <Panel $w={308} $mb={2}>
          <TabBar $h={21}>
            <Tab label="Files" active close grip left={6} />
            <Tab label="Effects" left={-6} />
            <Tab label="Favorites" left={2} />
            <PanelEar />
          </TabBar>
          <Body>
            <FilesTools>
              <FolderOpen />
              <FolderClose />
              <ImportWave />
              <ImportTrack />
              <ImportCd />
              <EyeButton><CheckEye /></EyeButton>
            </FilesTools>
            <FileList>
              {FILES.map((f, i) => (
                <FileRow key={f}>
                  <WaveGlyph w={14} h={13} />
                  <FileName $on={i === 0}>{f}</FileName>
                </FileRow>
              ))}
            </FileList>
            <FilesFoot>
              <PreviewRow>
                <Speaker />
                <SmallBtn $ml={5}><LoopGlyph /></SmallBtn>
                <PlayHint width="8" height="12" viewBox="0 0 8 12"><path d="M1 1l6 5-6 5Z" fill="#555" /></PlayHint>
                <Bars />
                <KnobSlot><Knob /></KnobSlot>
                <LinkValue>0</LinkValue>
              </PreviewRow>
              <SortRow>
                <span>Sort By:</span>
                <Select $w={102}>Filename<SelectArrow /></Select>
              </SortRow>
              <SortButtons>
                {['wave', 'loop', 'film', 'note'].map((k) => <SmallBtn key={k}><FilterGlyph kind={k} /></SmallBtn>)}
                <VSep />
                <SmallBtn><FunnelEye /></SmallBtn>
                <DosFolder />
              </SortButtons>
            </FilesFoot>
          </Body>
        </Panel>

        <Panel>
          <TabBar $h={20}>
            <Tab label="Main" active focus grip left={7} height={18} />
            <PanelEar focus height={18} />
          </TabBar>
          <FocusBody>
            <Overview />
            <WaveChart />
          </FocusBody>
        </Panel>
      </WorkRow>

      <DockRow $h={91}>
        <Panel $w={808}>
          <TabBar $h={22} $fade>
            <Tab label="Transport" active close grip left={6} />
            <PanelEar />
          </TabBar>
          <Body>
            <TransportBar>
              {TRANSPORT.map((t) => (
                <TransportBtn key={t.key} $off={t.off}>
                  {t.loop ? <LoopGlyph /> : <Svg w={15} h={14}>{t.d}</Svg>}
                </TransportBtn>
              ))}
            </TransportBar>
          </Body>
        </Panel>
        <Panel $w={118}>
          <TabBar $h={22} $fade>
            <Tab label="Time" active close grip left={5} />
            <PanelEar />
          </TabBar>
          <Body><TimeValue>0:00.000</TimeValue></Body>
        </Panel>
        <Panel $w={139}>
          <TabBar $h={22} $fade>
            <Tab label="Zoom" active close grip left={5} />
            <PanelEar />
          </TabBar>
          <Body>
            <ZoomGrid>
              <ZoomCell><Magnifier sign="+" arrowTop /></ZoomCell>
              <ZoomCell><Magnifier sign="-" arrowTop faded /></ZoomCell>
              <ZoomCell><Magnifier sign="-" dots /></ZoomCell>
              <ZoomCell><Magnifier frame /></ZoomCell>
              <ZoomCell><Magnifier frame /></ZoomCell>
              <ZoomCell><Magnifier frame /></ZoomCell>
              <ZoomCell $sep><Magnifier sign="+" arrowV /></ZoomCell>
              <ZoomCell><Magnifier sign="-" arrowV /></ZoomCell>
            </ZoomGrid>
          </Body>
        </Panel>
        <Panel>
          <TabBar $h={22} $fade>
            <Tab label="Selection/View" active close grip left={6} />
            <PanelEar />
          </TabBar>
          <Body>
            <SelectionGrid>
              <span />
              <ColHead>Begin</ColHead>
              <ColHead>End</ColHead>
              <ColHead>Length</ColHead>
              <RowHead>Selection</RowHead>
              <TimeField>0:00.000</TimeField>
              <TimeField />
              <TimeField>0:00.000</TimeField>
              <RowHead>View</RowHead>
              <TimeField>0:00.000</TimeField>
              <TimeField>1:40.045</TimeField>
              <TimeField>1:40.045</TimeField>
            </SelectionGrid>
          </Body>
        </Panel>
      </DockRow>

      <DockRow $h={74}>
        <Panel>
          <TabBar $h={24}>
            <Tab label="Levels" active close grip left={6} />
            <PanelEar />
          </TabBar>
          <Body>
            <MeterRow>
              <Meter />
              <PeakBoxes><PeakBox /><PeakBox /></PeakBoxes>
            </MeterRow>
            <Levels />
          </Body>
        </Panel>
      </DockRow>

      <StatusBar>
        <StatusText $first $pad={6}>Opened in 28.62 seconds</StatusText>
        <StatusText $first $w={121} $pad={0}>{'L: -inf dB @  0:00.032'}</StatusText>
        <StatusText $w={133}>96000 • 32-bit • Stereo</StatusText>
        <StatusText $w={78}>73.27 MB</StatusText>
        <StatusText $w={97}>143.67 GB free</StatusText>
        <StatusText $w={105}>55:47:50.59 free</StatusText>
        <StatusText $w={73} />
        <StatusText $w={113}>Waveform</StatusText>
      </StatusBar>
    </Root>
  </>
);

export default App;
